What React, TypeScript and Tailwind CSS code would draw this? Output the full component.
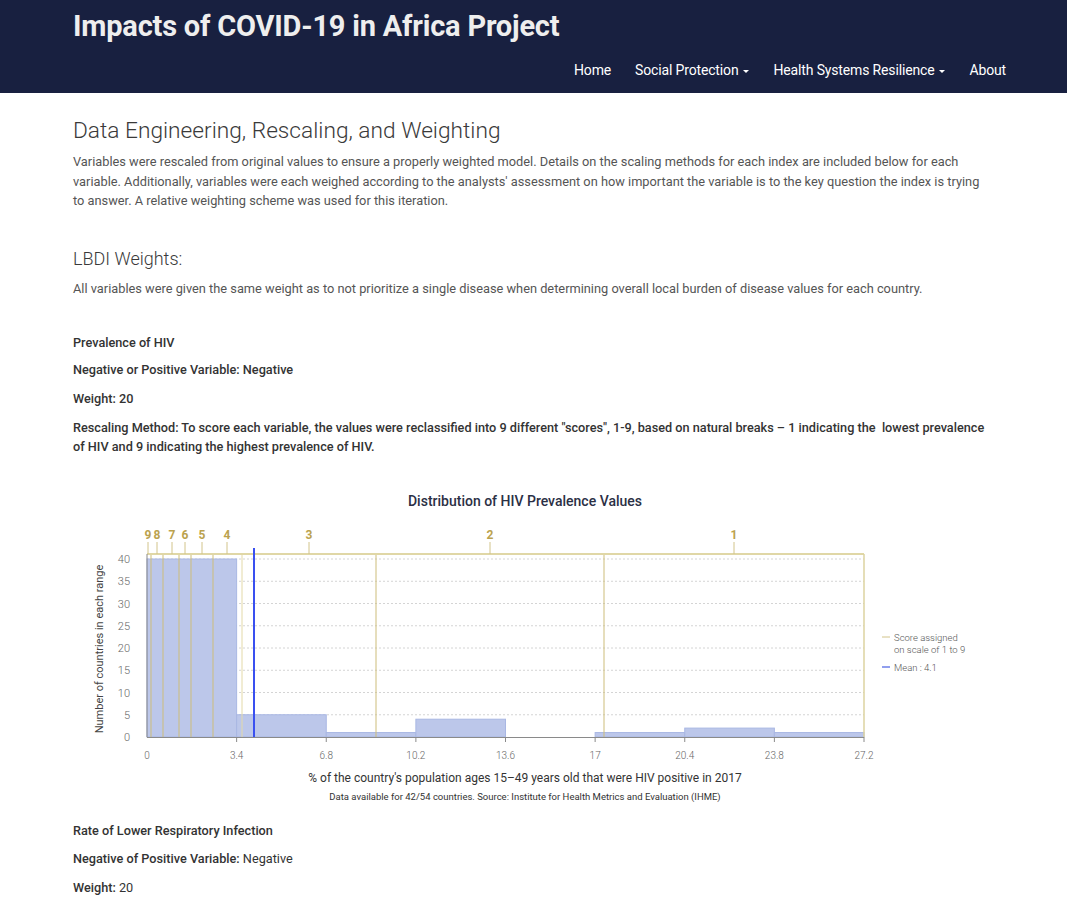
import React from "react";

const F = { fontFamily: "Roboto, 'Noto Sans', Arial, sans-serif" };

function Caret() {
  return <span className="inline-block ml-[5px] align-middle border-x-[3.5px] border-x-transparent border-t-[3.5px] border-t-white" />;
}

function Chart() {
  const x0 = 147;
  const xs = (v: number) => x0 + (v / 27.2) * 717;
  const ys = (v: number) => 736 - v * 4.45;
  const bars = [40, 5, 1, 4, 0, 1, 2, 1];
  const grid = [5, 10, 15, 20, 25, 30, 35, 40];
  const xl = ["0", "3.4", "6.8", "10.2", "13.6", "17", "20.4", "23.8", "27.2"];
  const goldLines = [151, 163, 179, 191, 213, 242, 376, 604];
  const labels: [string, number][] = [
    ["9", 148], ["8", 157], ["7", 172], ["6", 185], ["5", 202], ["4", 227], ["3", 309], ["2", 490], ["1", 734],
  ];
  return (
    <svg width="921" height="325" viewBox="73 480 921 325" className="block" style={F}>
      <text x="525" y="505" textAnchor="middle" fontSize="14" fontWeight="500" fill="#2b3045">
        Distribution of HIV Prevalence Values
      </text>
      {grid.map((g) => (
        <line key={g} x1={x0} x2={864} y1={ys(g)} y2={ys(g)} stroke="#d4d4d4" strokeDasharray="2 2" strokeWidth="1" />
      ))}
      {bars.map((b, i) =>
        b > 0 ? (
          <rect key={i} x={xs(i * 3.4)} y={ys(b)} width={xs(3.4) - x0} height={b * 4.45} fill="#bcc7ea" stroke="#a9b7e3" strokeWidth="1" />
        ) : null
      )}
      {goldLines.map((g, i) => (
        <line key={i} x1={g} x2={g} y1={553} y2={736} stroke={i === 5 ? "#e3d9a8" : "#cdbd7a"} strokeWidth="1" />
      ))}
      <line x1={x0} x2={864} y1={553} y2={553} stroke="#e0d7a6" strokeWidth="2" />
      <line x1={864} x2={864} y1={553} y2={736} stroke="#ddd3a0" strokeWidth="1.5" />
      {labels.map(([t, x]) => (
        <g key={t}>
          <line x1={x} x2={x} y1={541} y2={553} stroke="#d2c48a" strokeWidth="1" />
          <text x={x} y={538} textAnchor="middle" fontSize="12" fontWeight="700" fill="#bba24e">{t}</text>
        </g>
      ))}
      <line x1={254} x2={254} y1={547} y2={736} stroke="#3a50f0" strokeWidth="2" />
      <line x1={x0} x2={864} y1={736.5} y2={736.5} stroke="#8a8a8a" strokeWidth="1" />
      <line x1={x0} x2={x0} y1={553} y2={736} stroke="#8a8a8a" strokeWidth="1" />
      {xl.map((t, i) => (
        <g key={t}>
          {i > 0 && <line x1={xs(i * 3.4)} x2={xs(i * 3.4)} y1={736} y2={741} stroke="#8a8a8a" strokeWidth="1" />}
          <text x={xs(i * 3.4)} y={758} textAnchor="middle" fontSize="10" fontWeight="300" fill="#666">{t}</text>
        </g>
      ))}
      {[0, ...grid].map((g) => (
        <text key={g} x={130} y={ys(g) + 4} textAnchor="end" fontSize="11" fontWeight="300" fill="#666">{g}</text>
      ))}
      <text x={0} y={0} transform="translate(103 648) rotate(-90)" textAnchor="middle" fontSize="11" fill="#444">
        Number of countries in each range
      </text>
      <text x={525} y={781} textAnchor="middle" fontSize="12" fill="#333">
        % of the country's population ages 15–49 years old that were HIV positive in 2017
      </text>
      <text x={525} y={799} textAnchor="middle" fontSize="9.5" fill="#333">
        Data available for 42/54 countries. Source: Institute for Health Metrics and Evaluation (IHME)
      </text>
      <line x1={882} x2={890} y1={636} y2={636} stroke="#d2c48a" strokeWidth="1" />
      <text x={894} y={639.5} fontSize="9.5" fontWeight="300" fill="#555">Score assigned</text>
      <text x={894} y={651.5} fontSize="9.5" fontWeight="300" fill="#555">on scale of 1 to 9</text>
      <line x1={882} x2={890} y1={666} y2={666} stroke="#6d7fe8" strokeWidth="1.5" />
      <text x={894} y={669.5} fontSize="9.5" fontWeight="300" fill="#555">Mean : 4.1</text>
    </svg>
  );
}

export default function App() {
  return (
    <div className="min-h-[897px] bg-white" style={F}>
      <header className="h-[93px] bg-[#182040] px-[73px] relative">
        <div className="pt-[9px] text-[29px] leading-[34px] font-bold text-[#eeeeee] tracking-[-0.2px]">
          Impacts of COVID-19 in Africa Project
        </div>
        <nav className="absolute right-[61px] top-[60px] flex items-center gap-[24px] text-[14px] leading-[20px] text-white tracking-[-0.15px]">
          <span>Home</span>
          <span>Social Protection<Caret /></span>
          <span>Health Systems Resilience<Caret /></span>
          <span>About</span>
        </nav>
      </header>
      <main className="pl-[73px] pr-[77px] pt-[25px] text-[12.8px] leading-[19.5px] text-[#555]">
        <h2 className="text-[22.7px] leading-[26px] font-light text-[#3a3a3a]">Data Engineering, Rescaling, and Weighting</h2>
        <p className="mt-[8px]">
          Variables were rescaled from original values to ensure a properly weighted model. Details on the scaling methods for each index are included below for each variable. Additionally, variables were each weighed according to the analysts' assessment on how important the variable is to the key question the index is trying to answer. A relative weighting scheme was used for this iteration.
        </p>
        <h3 className="mt-[37.5px] text-[18px] leading-[22px] font-light text-[#3a3a3a]">LBDI Weights:</h3>
        <p className="mt-[9px]">
          All variables were given the same weight as to not prioritize a single disease when determining overall local burden of disease values for each country.
        </p>
        <div className="font-medium text-[#333] text-[12.7px]">
          <p className="mt-[34px]">Prevalence of HIV</p>
          <p className="mt-[7.5px]">Negative or Positive Variable: Negative</p>
          <p className="mt-[9.5px]">Weight: 20</p>
          <p className="mt-[9.5px] -mr-[4px]">
            Rescaling Method: To score each variable, the values were reclassified into 9 different "scores", 1-9, based on natural breaks – 1 indicating the&nbsp; lowest prevalence of HIV and 9 indicating the highest prevalence of HIV.
          </p>
        </div>
        <div className="mt-[24px] -mr-[77px]">
          <Chart />
        </div>
        <div className="text-[#333] text-[12.7px]">
          <p className="mt-[15px] font-medium">Rate of Lower Respiratory Infection</p>
          <p className="mt-[8.5px]"><span className="font-medium">Negative of Positive Variable:</span> Negative</p>
          <p className="mt-[9.5px]"><span className="font-medium">Weight:</span> 20</p>
        </div>
      </main>
    </div>
  );
}
